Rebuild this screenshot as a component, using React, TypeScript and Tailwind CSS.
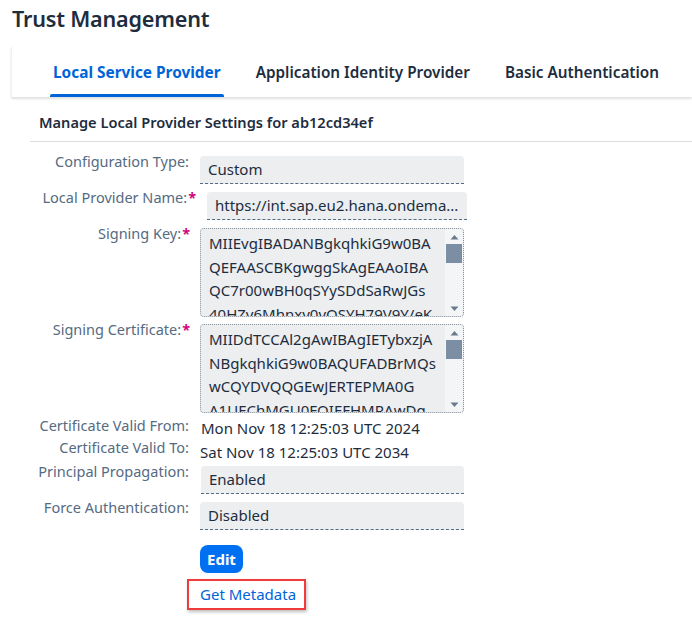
import React from "react";

const font = { fontFamily: '"Noto Sans", "Liberation Sans", sans-serif' };

function Label({ text, req, className = "" }: { text: string; req?: boolean; className?: string }) {
  return (
    <div className={`shrink-0 -mt-[4px] text-right text-[14.5px] leading-[18px] text-[#556b82] whitespace-nowrap ${className}`}>
      {text}
      {req && <span className="text-[#d1057e] font-bold ml-[1px]">*</span>}
    </div>
  );
}

function Field({ value, className = "" }: { value: string; className?: string }) {
  return (
    <div
      className={`h-[28px] bg-[#eceef0] rounded-t-[4px] border-b border-dashed border-[#556b82] px-[8px] flex items-center text-[15px] text-[#1d2d3e] whitespace-nowrap overflow-hidden ${className}`}
    >
      {value}
    </div>
  );
}

function Scrollbar() {
  return (
    <div className="w-[18px] shrink-0 bg-[#f4f5f6] flex flex-col items-center pt-[5px] pb-[4px]">
      <svg width="9" height="6" viewBox="0 0 9 6"><path d="M0.5 5.5 L4.5 1 L8.5 5.5 Z" fill="#6a7b8e" /></svg>
      <div className="w-[16px] h-[19px] bg-[#7b8ea3] mt-[4px]" />
      <div className="flex-1" />
      <svg width="9" height="6" viewBox="0 0 9 6"><path d="M0.5 0.5 L4.5 5 L8.5 0.5 Z" fill="#6a7b8e" /></svg>
    </div>
  );
}

function TextArea({ lines }: { lines: string[] }) {
  return (
    <div className="ml-[10px] w-[264px] h-[89px] bg-[#eceef0] rounded-[4px] border border-dotted border-[#89919a] flex overflow-hidden">
      <div className="flex-1 pl-[8px] pt-[3px] text-[15px] leading-[23.5px] text-[#1d2d3e] overflow-hidden whitespace-nowrap">
        {lines.map((l, i) => (
          <div key={i}>{l}</div>
        ))}
      </div>
      <Scrollbar />
    </div>
  );
}

export default function App() {
  return (
    <div className="w-[692px] h-[620px] bg-white overflow-hidden" style={font}>
      <div className="pl-[12px] pt-[3px] h-[47px] text-[21.6px] font-semibold text-[#1d2d3e] tracking-[-0.2px]">
        Trust Management
      </div>
      <div className="ml-[11px] h-[50px] bg-white border-l border-[#f0f0f0] shadow-[0_2px_2px_rgba(0,0,0,0.12)] flex items-end">
        <div className="ml-[38px] flex flex-col items-center">
          <div className="px-[3px] text-[15.4px] font-bold text-[#0064d9] pb-[10px]">Local Service Provider</div>
          <div className="h-[3px] w-full bg-[#0064d9] rounded-t-[2px]" />
        </div>
        <div className="ml-[32px] text-[15.3px] font-semibold text-[#1d2d3e] pb-[13px]">Application Identity Provider</div>
        <div className="ml-[35px] text-[15.3px] font-semibold text-[#1d2d3e] pb-[13px]">Basic Authentication</div>
      </div>
      <div className="ml-[30px] mt-[15px] pl-[9px] h-[30px] border-b border-[#d9dde1] text-[14.6px] font-semibold text-[#1d2d3e]">
        Manage Local Provider Settings for ab12cd34ef
      </div>
      <div className="flex flex-col mt-[14px]">
        <div className="flex">
          <Label text="Configuration Type:" className="w-[190px] pr-[1px]" />
          <Field value="Custom" className="ml-[10px] w-[264px]" />
        </div>
        <div className="flex mt-[8px]">
          <Label text="Local Provider Name:" req className="w-[196px]" />
          <Field value="https://int.sap.eu2.hana.ondema..." className="ml-[11px] w-[260px]" />
        </div>
        <div className="flex mt-[8px]">
          <Label text="Signing Key:" req className="w-[190px]" />
          <TextArea
            lines={[
              "MIIEvgIBADANBgkqhkiG9w0BA",
              "QEFAASCBKgwggSkAgEAAoIBA",
              "QC7r00wBH0qSYySDdSaRwJGs",
              "40HZy6Mhnxy0vQSYH79V9Y/eK",
            ]}
          />
        </div>
        <div className="flex mt-[7px]">
          <Label text="Signing Certificate:" req className="w-[190px]" />
          <TextArea
            lines={[
              "MIIDdTCCAl2gAwIBAgIETybxzjA",
              "NBgkqhkiG9w0BAQUFADBrMQs",
              "wCQYDVQQGEwJERTEPMA0G",
              "A1UEChMGU0FQIEFHMRAwDg",
            ]}
          />
        </div>
        <div className="flex mt-[7px] h-[22px] items-start">
          <Label text="Certificate Valid From:" className="w-[190px] pr-[1px]" />
          <div className="ml-[11px] -mt-[2px] text-[15px] text-[#1d2d3e] leading-[20px]">Mon Nov 18 12:25:03 UTC 2024</div>
        </div>
        <div className="flex h-[23px] items-start">
          <Label text="Certificate Valid To:" className="w-[190px] pr-[1px]" />
          <div className="ml-[10px] mt-[0px] text-[15px] text-[#1d2d3e] leading-[20px]">Sat Nov 18 12:25:03 UTC 2034</div>
        </div>
        <div className="flex mt-[1px]">
          <Label text="Principal Propagation:" className="w-[190px] pr-[1px]" />
          <Field value="Enabled" className="ml-[11px] w-[263px]" />
        </div>
        <div className="flex mt-[8px]">
          <Label text="Force Authentication:" className="w-[190px] pr-[1px]" />
          <Field value="Disabled" className="ml-[10px] w-[264px]" />
        </div>
        <div className="ml-[200px] mt-[15px]">
          <button className="h-[28px] px-[7px] rounded-[8px] bg-[#0070f2] text-white text-[15px] font-bold">Edit</button>
        </div>
        <div className="ml-[187px] mt-[6px] w-[119px] h-[31px] border-2 border-[#ef3b3b] shadow-[1px_2px_3px_rgba(0,0,0,0.25)] flex items-center pl-[11px] text-[15px] text-[#0064d9]">
          Get Metadata
        </div>
      </div>
    </div>
  );
}
